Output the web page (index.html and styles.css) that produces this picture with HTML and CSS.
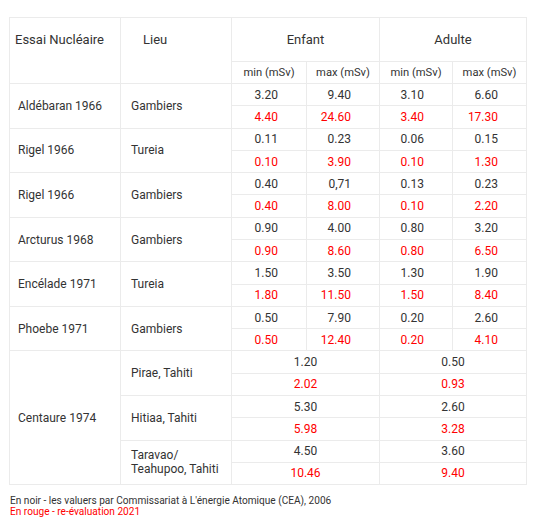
FILE: index.html
```html
<!DOCTYPE html>
<html lang="fr">
<head>
<meta charset="utf-8">
<title>Essais nucléaires</title>
<link rel="stylesheet" href="styles.css">
</head>
<body>
<div class="page">
<table class="doses">
<colgroup>
<col class="c-name"><col class="c-place"><col class="c-n1"><col class="c-n2"><col class="c-n3"><col class="c-n4">
</colgroup>
<thead>
<tr class="h1">
<th rowspan="2" class="th-name">Essai Nucléaire</th>
<th rowspan="2" class="th-place">Lieu</th>
<th colspan="2" class="th-group">Enfant</th>
<th colspan="2" class="th-group">Adulte</th>
</tr>
<tr class="h2">
<th class="th-sub">min (mSv)</th>
<th class="th-sub">max (mSv)</th>
<th class="th-sub">min (mSv)</th>
<th class="th-sub">max (mSv)</th>
</tr>
</thead>
<tbody>
<tr><td rowspan="2" class="name">Aldébaran 1966</td><td rowspan="2" class="place">Gambiers</td><td class="num">3.20</td><td class="num">9.40</td><td class="num">3.10</td><td class="num">6.60</td></tr>
<tr class="red"><td class="num">4.40</td><td class="num">24.60</td><td class="num">3.40</td><td class="num">17.30</td></tr>

<tr><td rowspan="2" class="name">Rigel 1966</td><td rowspan="2" class="place">Tureia</td><td class="num">0.11</td><td class="num">0.23</td><td class="num">0.06</td><td class="num">0.15</td></tr>
<tr class="red"><td class="num">0.10</td><td class="num">3.90</td><td class="num">0.10</td><td class="num">1.30</td></tr>

<tr><td rowspan="2" class="name">Rigel 1966</td><td rowspan="2" class="place">Gambiers</td><td class="num">0.40</td><td class="num">0,71</td><td class="num">0.13</td><td class="num">0.23</td></tr>
<tr class="red"><td class="num">0.40</td><td class="num">8.00</td><td class="num">0.10</td><td class="num">2.20</td></tr>

<tr><td rowspan="2" class="name">Arcturus 1968</td><td rowspan="2" class="place">Gambiers</td><td class="num">0.90</td><td class="num">4.00</td><td class="num">0.80</td><td class="num">3.20</td></tr>
<tr class="red"><td class="num">0.90</td><td class="num">8.60</td><td class="num">0.80</td><td class="num">6.50</td></tr>

<tr><td rowspan="2" class="name">Encélade 1971</td><td rowspan="2" class="place">Tureia</td><td class="num">1.50</td><td class="num">3.50</td><td class="num">1.30</td><td class="num">1.90</td></tr>
<tr class="red"><td class="num">1.80</td><td class="num">11.50</td><td class="num">1.50</td><td class="num">8.40</td></tr>

<tr><td rowspan="2" class="name">Phoebe 1971</td><td rowspan="2" class="place">Gambiers</td><td class="num">0.50</td><td class="num">7.90</td><td class="num">0.20</td><td class="num">2.60</td></tr>
<tr class="red"><td class="num">0.50</td><td class="num">12.40</td><td class="num">0.20</td><td class="num">4.10</td></tr>

<tr><td rowspan="6" class="name">Centaure 1974</td><td rowspan="2" class="place">Pirae, Tahiti</td><td colspan="2" class="mid">1.20</td><td colspan="2" class="mid">0.50</td></tr>
<tr class="red"><td colspan="2" class="mid">2.02</td><td colspan="2" class="mid">0.93</td></tr>
<tr><td rowspan="2" class="place">Hitiaa, Tahiti</td><td colspan="2" class="mid">5.30</td><td colspan="2" class="mid">2.60</td></tr>
<tr class="red"><td colspan="2" class="mid">5.98</td><td colspan="2" class="mid">3.28</td></tr>
<tr><td rowspan="2" class="place">Taravao/<br>Teahupoo, Tahiti</td><td colspan="2" class="mid">4.50</td><td colspan="2" class="mid">3.60</td></tr>
<tr class="red"><td colspan="2" class="mid">10.46</td><td colspan="2" class="mid">9.40</td></tr>
</tbody>
</table>
<div class="notes">
<p class="note">En noir - les valuers par Commissariat à L'énergie Atomique (CEA), 2006</p>
<p class="note note-red">En rouge - re-évaluation 2021</p>
</div>
</div>
</body>
</html>
```
FILE: styles.css
```css
html, body {
  margin: 0;
  padding: 0;
  background: #ffffff;
}
.page {
  padding: 17px 0 0 9px;
  font-family: Roboto, "Liberation Sans", sans-serif;
  color: #333333;
}
.doses {
  border-collapse: collapse;
  table-layout: fixed;
  width: 517px;
}
.c-name { width: 111px; }
.c-place { width: 111px; }
.c-n1 { width: 75px; }
.c-n2 { width: 73px; }
.c-n3 { width: 73px; }
.c-n4 { width: 74px; }

.doses th, .doses td {
  border: 1px solid #ebebeb;
  font-weight: 400;
}
.doses th {
  font-size: 13px;
  line-height: 15px;
  padding: 14px 0;
}
.th-name, .th-place {
  vertical-align: top;
  text-align: left;
}
.th-name { padding-left: 5px !important; }
.th-place { padding-left: 22px !important; }
.th-group { text-align: center; }
.doses .th-sub {
  font-size: 11.2px;
  line-height: 13px;
  padding: 4px 0;
  text-align: center;
}
.doses td {
  font-size: 12px;
  line-height: 14px;
  padding: 3.7px 0 3.6px;
}
.name {
  vertical-align: middle;
  padding-left: 8px !important;
}
.place {
  vertical-align: middle;
  padding-left: 10px !important;
}
.num {
  text-align: right;
  padding-right: 28px !important;
}
.mid {
  text-align: center;
}
.red td { color: #ff0000; }

.notes {
  margin-top: 11px;
  padding-left: 1px;
}
.note {
  margin: 0;
  font-size: 10.1px;
  line-height: 10.5px;
}
.note-red { color: #ff0000; }
```
